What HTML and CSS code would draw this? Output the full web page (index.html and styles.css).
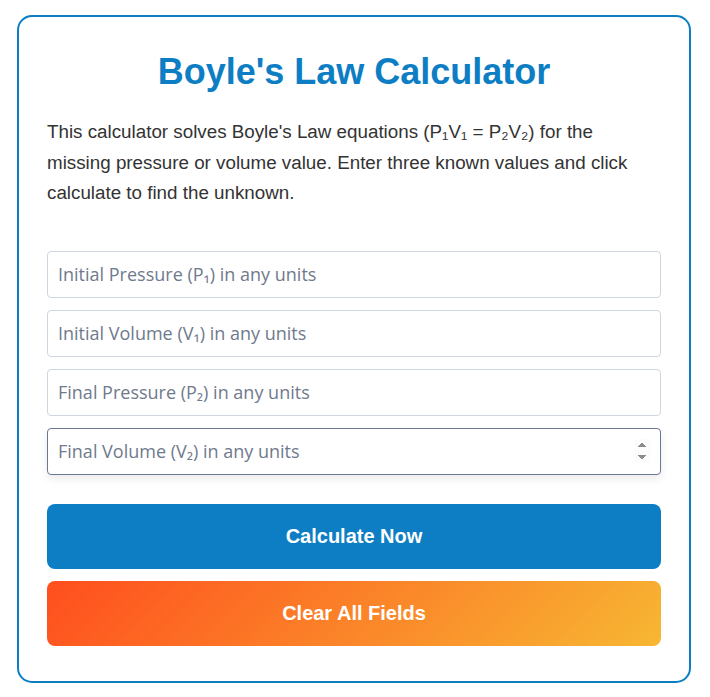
FILE: index.html
```html
<!DOCTYPE html>
<html lang="en">
<head>
  <meta charset="UTF-8">
  <meta name="viewport" content="width=device-width, initial-scale=1.0">
  <title>Boyle's Law Calculator</title>
  <link rel="stylesheet" href="styles.css">
</head>
<body>
  <div class="calculator">
    <h1 class="title">Boyle's Law Calculator</h1>
    <p class="intro">This calculator solves Boyle's Law equations (P₁V₁ = P₂V₂) for the missing pressure or volume value. Enter three known values and click calculate to find the unknown.</p>

    <div class="fields">
      <input type="number" id="p1" class="field" placeholder="Initial Pressure (P₁) in any units">
      <input type="number" id="v1" class="field" placeholder="Initial Volume (V₁) in any units">
      <input type="number" id="p2" class="field" placeholder="Final Pressure (P₂) in any units">
      <input type="number" id="v2" class="field" placeholder="Final Volume (V₂) in any units" autofocus>
    </div>

    <div class="actions">
      <button class="btn btn-calc" onclick="calcular()">Calculate Now</button>
      <button class="btn btn-clear" onclick="limpar()">Clear All Fields</button>
    </div>
  </div>

  <script>
    function calcular() {
      const ids = ['p1', 'v1', 'p2', 'v2'];
      const vals = ids.map(id => parseFloat(document.getElementById(id).value));
      const vazio = vals.filter(v => isNaN(v));
      if (vazio.length !== 1) return;
      const [p1, v1, p2, v2] = vals;
      if (isNaN(p1)) document.getElementById('p1').value = (p2 * v2 / v1).toFixed(4);
      if (isNaN(v1)) document.getElementById('v1').value = (p2 * v2 / p1).toFixed(4);
      if (isNaN(p2)) document.getElementById('p2').value = (p1 * v1 / v2).toFixed(4);
      if (isNaN(v2)) document.getElementById('v2').value = (p1 * v1 / p2).toFixed(4);
    }

    function limpar() {
      document.querySelectorAll('.field').forEach(f => f.value = '');
    }
  </script>
</body>
</html>
```

FILE: styles.css
```css
body {
  font-family: "Liberation Sans", Arial, sans-serif;
  background-color: #ffffff;
  margin: 0;
  padding: 15px 19px 15px 17px;
}
.calculator {
  border: 2px solid #0d7ec4;
  border-radius: 15px;
  padding: 28px 28px 35px;
}
.title {
  color: #0d7ec4;
  font-size: 36px;
  text-align: center;
  margin: 6px 0 24px;
}
.intro {
  color: #333333;
  font-size: 18.8px;
  line-height: 30.5px;
  margin: 0 0 42px;
  padding-right: 12px;
}
.fields {
  display: flex;
  flex-direction: column;
  gap: 12px;
}
.field {
  box-sizing: border-box;
  width: 100%;
  height: 47px;
  padding: 0 10px;
  font-family: "Open Sans", sans-serif;
  font-size: 18px;
  color: #333;
  border: 1px solid #cfd6df;
  border-radius: 4px;
  outline: none;
}
.field::placeholder {
  color: #6f7a8c;
}
.field:focus {
  border-color: #6b7894;
  box-shadow: 0 4px 8px rgba(0, 0, 0, 0.08);
}
.actions {
  display: flex;
  flex-direction: column;
  gap: 12px;
  margin-top: 29px;
}
.btn {
  height: 65px;
  border: none;
  border-radius: 8px;
  color: white;
  font-family: "Liberation Sans", Arial, sans-serif;
  font-size: 20px;
  font-weight: bold;
  cursor: pointer;
}
.btn-calc {
  background-color: #0d7ec4;
}
.btn-clear {
  background: linear-gradient(135deg, #ff4e1e 0%, #f7b733 100%);
}
```
